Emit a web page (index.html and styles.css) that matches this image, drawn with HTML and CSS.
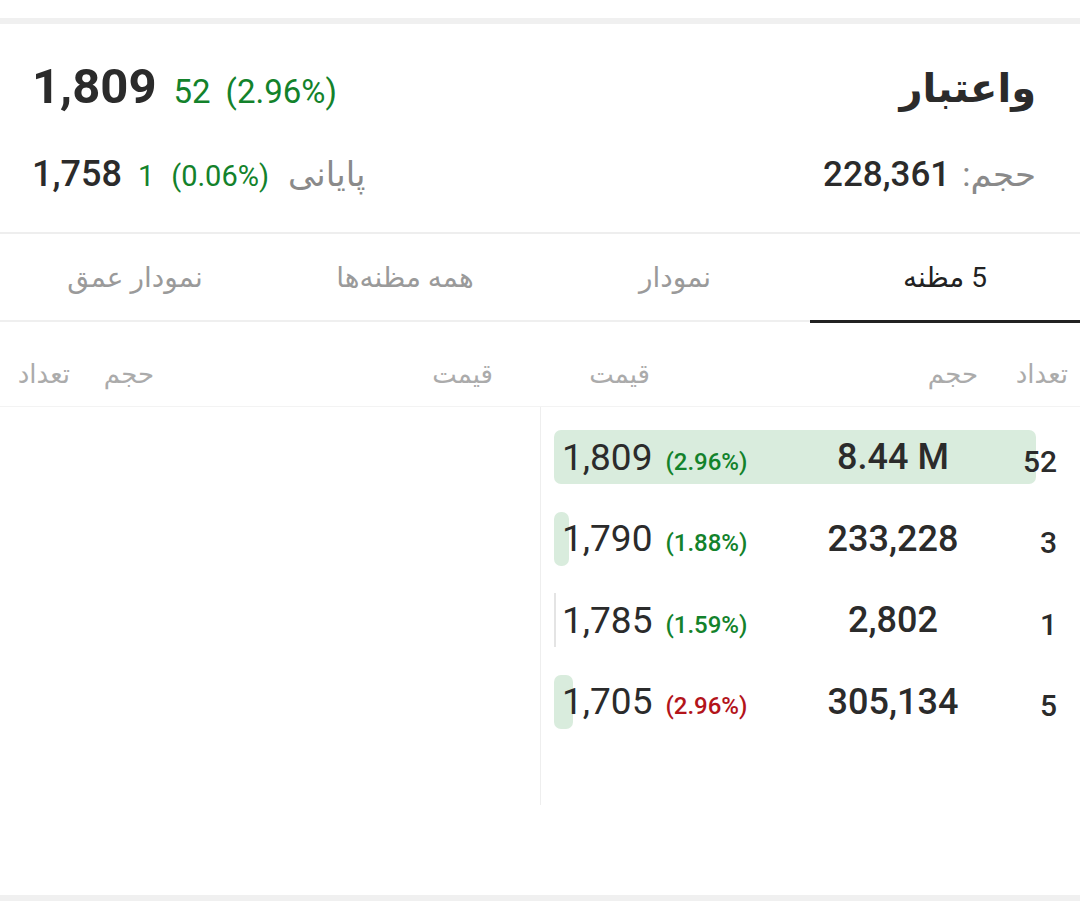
FILE: index.html
```html
<!DOCTYPE html>
<html lang="fa" dir="rtl">
<head>
<meta charset="utf-8">
<title>واعتبار</title>
<link rel="stylesheet" href="styles.css">
</head>
<body>
<div class="app">
  <div class="top-space"></div>
  <div class="band"></div>

  <section class="summary">
    <div class="sum-row sum-row1">
      <h1 class="title">واعتبار</h1>
      <div class="quote" dir="ltr">
        <span class="last">1,809</span>
        <span class="chg up">52</span>
        <span class="pct up">(2.96%)</span>
      </div>
    </div>
    <div class="sum-row sum-row2">
      <div class="vol"><span class="lbl vlbl">حجم:</span><span class="val">228,361</span></div>
      <div class="close" dir="ltr">
        <span class="cval">1,758</span>
        <span class="cchg up">1</span>
        <span class="cpct up">(0.06%)</span>
        <span class="lbl clbl">پایانی</span>
      </div>
    </div>
  </section>

  <nav class="tabs">
    <div class="tab active">5 مظنه</div>
    <div class="tab">نمودار</div>
    <div class="tab">همه مظنه‌ها</div>
    <div class="tab">نمودار عمق</div>
  </nav>

  <div class="heads">
    <div class="heads-half heads-bid">
      <span>تعداد</span><span>حجم</span><span>قیمت</span>
    </div>
    <div class="heads-half heads-ask">
      <span>قیمت</span><span>حجم</span><span>تعداد</span>
    </div>
  </div>

  <div class="book">
    <div class="side side-bid">
      <div class="rows">
        <div class="row">
          <div class="bar" style="width:482px"></div>
          <div class="c-price"><span class="p">1,809</span><span class="pp up">(2.96%)</span></div>
          <div class="c-vol">8.44 M</div>
          <div class="c-cnt">52</div>
        </div>
        <div class="row">
          <div class="bar" style="width:15px"></div>
          <div class="c-price"><span class="p">1,790</span><span class="pp up">(1.88%)</span></div>
          <div class="c-vol">233,228</div>
          <div class="c-cnt">3</div>
        </div>
        <div class="row">
          <div class="bar thin" style="width:2px"></div>
          <div class="c-price"><span class="p">1,785</span><span class="pp up">(1.59%)</span></div>
          <div class="c-vol">2,802</div>
          <div class="c-cnt">1</div>
        </div>
        <div class="row">
          <div class="bar" style="width:19px"></div>
          <div class="c-price"><span class="p">1,705</span><span class="pp down">(2.96%)</span></div>
          <div class="c-vol">305,134</div>
          <div class="c-cnt">5</div>
        </div>
      </div>
    </div>
    <div class="side side-ask"></div>
  </div>

  <div class="bottom-space"></div>
  <div class="band"></div>
</div>
</body>
</html>
```
FILE: styles.css
```css
* {
  box-sizing: border-box;
  margin: 0;
  padding: 0;
}

html, body {
  background: #ffffff;
}

body {
  width: 1080px;
  height: 901px;
  overflow: hidden;
  font-family: Roboto, "DejaVu Sans", sans-serif;
  color: #2b2b2b;
}

.app {
  width: 1080px;
}

.top-space {
  height: 18px;
}

.band {
  height: 6px;
  background: #f0f0f0;
}

/* Summary header */
.summary {
  padding: 30px 44px 32px 32px;
  border-bottom: 2px solid #eeeeee;
  display: flex;
  flex-direction: column;
  gap: 30px;
}

.sum-row {
  display: flex;
  justify-content: space-between;
  align-items: center;
}

.sum-row1 {
  height: 64px;
}

.sum-row2 {
  height: 52px;
}

.title {
  font-size: 40px;
  font-weight: 700;
  color: #2b2b2b;
  margin-top: 4px;
}

.quote {
  display: flex;
  align-items: baseline;
}

.last {
  font-size: 49px;
  font-weight: 700;
  color: #2b2b2b;
  margin-right: 17px;
}

.chg {
  font-size: 33px;
  margin-right: 15px;
}

.pct {
  font-size: 33px;
}

.up {
  color: #13822b;
}

.down {
  color: #b3141a;
}

.vol {
  display: flex;
  align-items: baseline;
  gap: 12px;
}

.lbl {
  font-size: 32px;
  color: #8a8a8a;
}

.vlbl {
  font-size: 34px;
}

.val {
  font-size: 35px;
  font-weight: 500;
  color: #2b2b2b;
}

.close {
  display: flex;
  align-items: baseline;
}

.cval {
  font-size: 36px;
  font-weight: 500;
  color: #2b2b2b;
  margin-right: 16px;
}

.cchg {
  font-size: 29px;
  margin-right: 17px;
}

.cpct {
  font-size: 29px;
  margin-right: 19px;
}

.clbl {
  font-size: 34px;
}

/* Tabs */
.tabs {
  display: flex;
  height: 88px;
  border-bottom: 2px solid #efefef;
}

.tab {
  position: relative;
  flex: 1 1 0;
  text-align: center;
  font-size: 28px;
  line-height: 88px;
  color: #9a9a9a;
}

.tab.active {
  color: #222222;
}

.tab.active::after {
  content: "";
  position: absolute;
  left: 0;
  right: 0;
  bottom: -3px;
  height: 3px;
  background: #222222;
}

/* Column headers */
.heads {
  display: flex;
  height: 85px;
  border-bottom: 1px solid #f3f3f3;
}

.heads-half {
  width: 540px;
  display: grid;
  padding-top: 35px;
  font-size: 26px;
  line-height: 34px;
  color: #ababab;
}

.heads-half span {
  padding-right: 12px;
}

.heads-bid {
  grid-template-columns: 90px 328px 1fr;
}

.heads-ask {
  grid-template-columns: 374px 84px 1fr;
}

.heads-ask span:first-child {
  padding-right: 47px;
}

/* Order book */
.book {
  display: flex;
  height: 398px;
}

.side {
  width: 540px;
}

.side-bid {
  border-left: 1px solid #eeeeee;
}

.rows {
  direction: ltr;
  padding: 23px 0 0 13px;
  display: flex;
  flex-direction: column;
  gap: 27.5px;
}

.row {
  position: relative;
  display: flex;
  height: 54px;
  align-items: center;
}

.bar {
  position: absolute;
  left: 0;
  top: 0;
  height: 54px;
  border-radius: 7px;
  background: #d9ecdd;
}

.bar.thin {
  background: #e4e4e4;
  border-radius: 0;
}

.c-price {
  position: relative;
  width: 236px;
  padding-left: 8px;
  display: flex;
  align-items: baseline;
}

.p {
  font-size: 37px;
  color: #2b2b2b;
  margin-right: 13px;
}

.pp {
  font-size: 24px;
  font-weight: 500;
}

.c-vol {
  position: relative;
  width: 206px;
  text-align: center;
  font-size: 36px;
  font-weight: 500;
  color: #2b2b2b;
}

.c-cnt {
  position: relative;
  width: 84px;
  text-align: right;
  padding-right: 23px;
  padding-top: 8px;
  font-size: 30px;
  font-weight: 500;
  color: #2b2b2b;
}

.bottom-space {
  height: 90px;
}
```
